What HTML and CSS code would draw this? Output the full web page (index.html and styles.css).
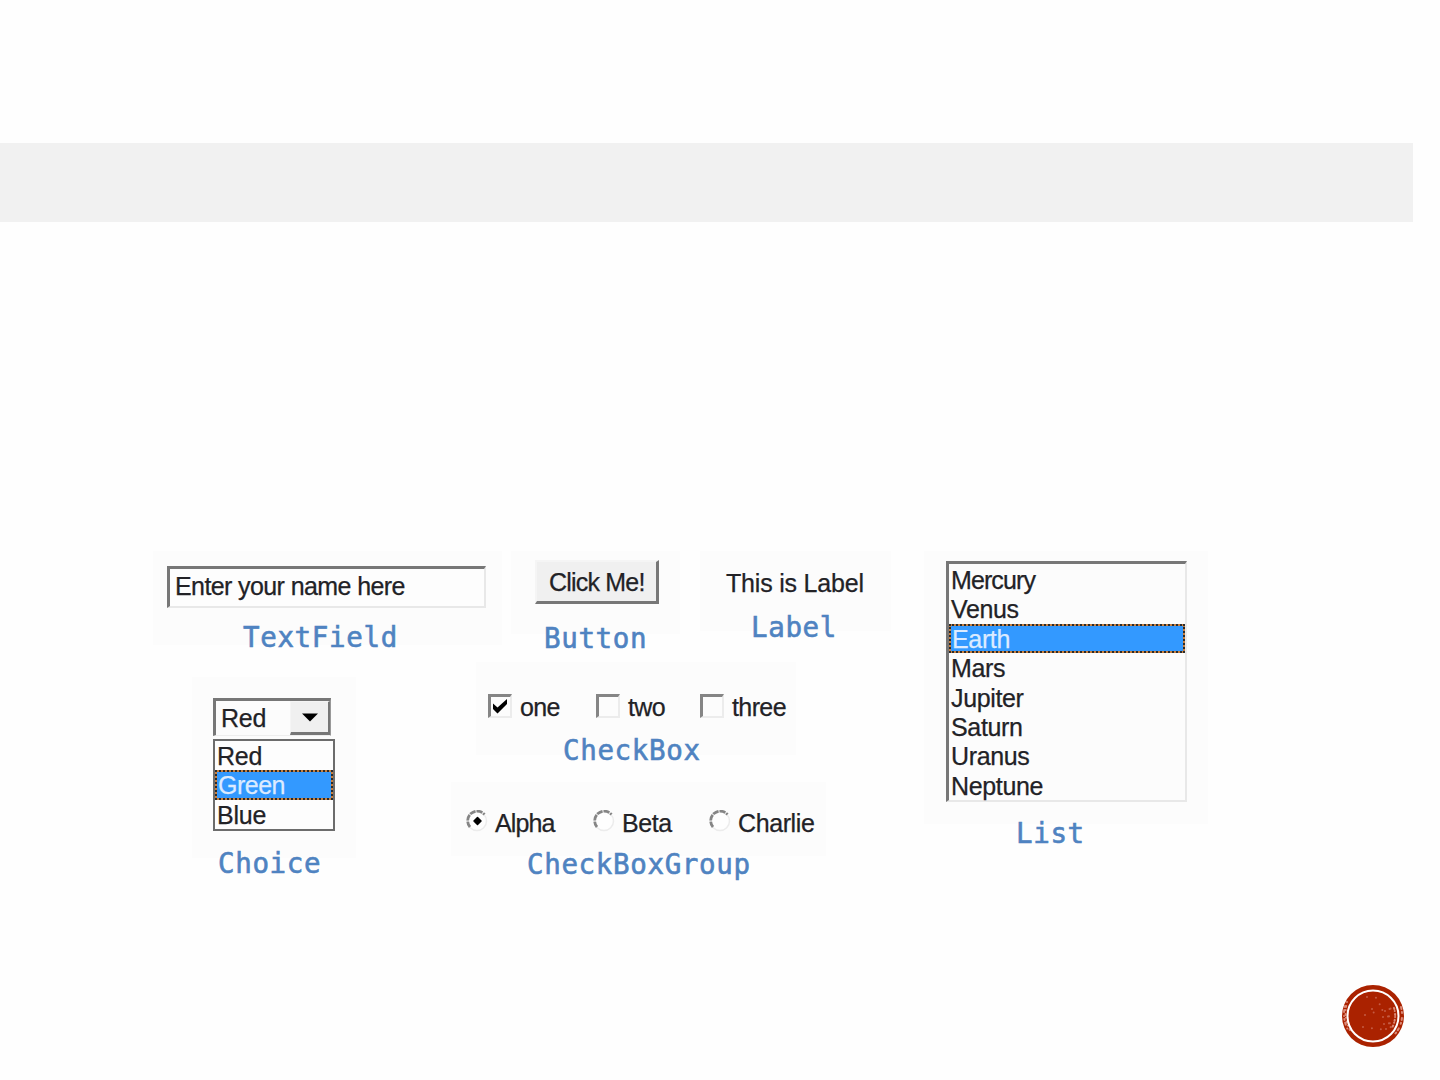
FILE: index.html
```html
<!DOCTYPE html>
<html lang="en">
<head>
<meta charset="utf-8">
<title>AWT components</title>
<link rel="stylesheet" href="styles.css">
</head>
<body>
<main class="slide">
  <header class="band"></header>
  <section class="gallery">
    <div class="left">
      <div class="top-row">
        <figure class="panel p-field">
          <div class="field"><span>Enter your name here</span></div>
          <figcaption>TextField</figcaption>
        </figure>
        <figure class="panel p-button">
          <div class="button"><span>Click Me!</span></div>
          <figcaption>Button</figcaption>
        </figure>
        <figure class="panel p-label">
          <div class="label"><span>This is Label</span></div>
          <figcaption>Label</figcaption>
        </figure>
      </div>
      <div class="bottom-row">
        <figure class="panel p-choice">
          <div class="select"><span>Red</span>
            <div class="arrow"><svg width="16" height="9" viewBox="0 0 16 9"><path d="M0 .5H16L8 8.500Z"/></svg></div>
          </div>
          <div class="options">
            <div class="option">Red</div>
            <div class="option selected">Green</div>
            <div class="option">Blue</div>
          </div>
          <figcaption>Choice</figcaption>
        </figure>
        <div class="stack">
          <figure class="panel p-check">
            <div class="checks">
              <div class="check"><i class="box"><svg width="19" height="19" viewBox="0 0 19 19"><path d="M2 6.500L6.500 10.500L16 2V7L6.500 16.500L2 12Z"/></svg></i><span>one</span></div>
              <div class="check"><i class="box"></i><span>two</span></div>
              <div class="check"><i class="box"></i><span>three</span></div>
            </div>
            <figcaption>CheckBox</figcaption>
          </figure>
          <figure class="panel p-group">
            <div class="radios">
              <div class="radio"><svg width="22" height="22" viewBox="0 0 22 22"><circle class="rim" cx="11" cy="11" r="9.500"/><path class="shade" d="M4 17A9.300 9.300 0 0 1 18.500 4.500"/><path class="dot" d="M11.500 7.500L15 11L11.500 14.500L8 11Z"/></svg><span>Alpha</span></div>
              <div class="radio"><svg width="22" height="22" viewBox="0 0 22 22"><circle class="rim" cx="11" cy="11" r="9.500"/><path class="shade" d="M4 17A9.300 9.300 0 0 1 18.500 4.500"/></svg><span>Beta</span></div>
              <div class="radio"><svg width="22" height="22" viewBox="0 0 22 22"><circle class="rim" cx="11" cy="11" r="9.500"/><path class="shade" d="M4 17A9.300 9.300 0 0 1 18.500 4.500"/></svg><span>Charlie</span></div>
            </div>
            <figcaption>CheckBoxGroup</figcaption>
          </figure>
        </div>
      </div>
    </div>
    <figure class="panel p-list">
      <div class="list">
        <div class="item">Mercury</div>
        <div class="item">Venus</div>
        <div class="item selected">Earth</div>
        <div class="item">Mars</div>
        <div class="item">Jupiter</div>
        <div class="item">Saturn</div>
        <div class="item">Uranus</div>
        <div class="item">Neptune</div>
      </div>
      <figcaption>List</figcaption>
    </figure>
  </section>
  <footer class="footer">
    <svg width="64" height="64" viewBox="0 0 64 64">
      <circle cx="32" cy="32" r="31" fill="#aa2200"/>
      <g fill="none" stroke="#dc8b78" stroke-width="2" stroke-linecap="round">
        <path stroke-dasharray="1 3 2 4 0 3" d="M4 22Q1 34 7 46"/>
        <path stroke-dasharray="0 4 1 3" d="M6 18Q2 33 9 46"/>
        <path stroke-dasharray="2 3 1 5" d="M60 23Q64 39 53 51"/>
        <path stroke-dasharray="1 2 0 3" d="M53 24Q56 34 51 44"/>
      </g>
      <g fill="none" stroke="#c45b43" stroke-width="2" stroke-linecap="round">
        <path stroke-dasharray="0 5 1 6" d="M44 27L51 24M42 33L51 32M43 40L50 39M45 45L50 43"/>
        <path stroke-dasharray="0 9" d="M26 13L39 14M31 25L44 17M24 31L45 25M22 43L45 46"/>
      </g>
      <circle cx="32" cy="32" r="25.500" fill="none" stroke="#fff" stroke-width="2"/>
    </svg>
  </footer>
</main>
</body>
</html>
```
FILE: styles.css
```css
* { box-sizing: border-box; }
body { margin: 0; background: #fefefe; }
figure { margin: 0; }

.slide {
  width: 1440px;
  height: 1080px;
  overflow: hidden;
  display: flex;
  flex-direction: column;
  padding-top: 143px;
  font: 25px/29px "Liberation Sans", Arial, sans-serif;
  letter-spacing: -0.2px;
  color: #222226;
  -webkit-text-stroke: 0.25px currentColor;
  white-space: nowrap;
}
.band { width: 1413px; height: 79px; flex: none; background: #f1f1f1; }

.gallery { display: flex; align-items: flex-start; margin: 329px 0 0 153px; height: 350px; flex: none; }
.left { width: 771px; }
.top-row { display: flex; align-items: flex-start; height: 111px; }
.bottom-row { display: flex; align-items: flex-start; padding-left: 39px; }

.panel { background: #fcfcfc; flex: none; }
figcaption {
  font: 27.5px/30px "DejaVu Sans Mono", monospace;
  letter-spacing: 0.65px;
  color: #4f83c1;
  -webkit-text-stroke: 0.6px currentColor;
}

/* text field */
.p-field { width: 349px; height: 94px; padding: 15px 0 0 14px; }
.field {
  width: 319px; height: 42px;
  padding: 3px 0 0 5px;
  background: #fdfdfd;
  border: solid; border-width: 3px 2px 2px 3px;
  border-color: #777 #e8e8e8 #e8e8e8 #777;
  letter-spacing: -0.6px;
}
.p-field figcaption { margin: 14px 0 0 76px; }

/* button */
.p-button { width: 169px; height: 83px; margin-left: 9px; padding: 9px 0 0 24px; }
.button {
  width: 124px; height: 44px;
  padding: 6px 0 0 12px;
  background: #f0f0f0;
  border: solid; border-width: 2px 3px 3px 2px;
  border-color: #f5f5f5 #777 #777 #f5f5f5;
  letter-spacing: -0.8px;
}
.p-button figcaption { margin: 19px 0 0 9px; }

/* label */
.p-label { width: 191px; height: 80px; margin-left: 20px; padding: 18px 0 0 26px; }
.p-label figcaption { margin: 14px 0 0 25px; }

/* choice */
.p-choice { width: 164px; height: 181px; margin-top: 15px; padding: 21px 0 0 21px; }
.select {
  display: flex; justify-content: space-between;
  width: 118px; height: 38px;
  padding-left: 5px;
  line-height: 35px;
  border: solid; border-width: 3px 1px 1px 3px;
  border-color: #777 #999 #eee #777;
}
.arrow {
  display: flex; align-items: center; justify-content: center;
  width: 40px; height: 34px;
  background: #f0f0f0;
  border: solid; border-width: 1px 2px 3px 1px;
  border-color: #f5f5f5 #777 #777 #f5f5f5;
}
.arrow path { fill: #000; }
.options { width: 122px; height: 92px; margin-top: 3px; border: 2px solid #6c6c6c; background: #fdfdfd; }
.option { height: 29.4px; line-height: 30.4px; padding-left: 2px; }
.selected {
  color: #dcebff;
  border: 2px dotted #2b2b2b;
  background: linear-gradient(#3399ff, #3399ff) padding-box, #c9803f border-box;
}
.option.selected { line-height: 27.4px; padding-left: 1px; letter-spacing: -0.5px; }
.p-choice figcaption { margin: 17px 0 0 5px; }

/* check boxes and radios */
.stack { padding-left: 95px; }
.p-check { width: 320px; height: 93px; margin-left: 25px; padding: 30px 0 0 12px; }
.checks { display: flex; height: 29px; line-height: 30px; }
.check { display: flex; }
.check:nth-child(1) { width: 108px; }
.check:nth-child(2) { width: 104px; }
.check span { margin-left: 8px; letter-spacing: -0.6px; }
.box {
  width: 24px; height: 24px; margin-top: 2px;
  border: solid; border-width: 3px 2px 2px 3px;
  border-color: #858585 #ececec #ececec #858585;
}
.box svg { display: block; }
.p-check figcaption { margin: 14px 0 0 75px; }

.p-group { width: 375px; height: 74px; margin-top: 27px; padding: 26px 0 0 15px; }
.radios { display: flex; height: 29px; line-height: 30px; }
.radio { display: flex; }
.radio:nth-child(1) { width: 127px; }
.radio:nth-child(2) { width: 116px; }
.radio svg { margin-top: 2px; }
.radio span { margin-left: 7px; letter-spacing: -0.4px; }
.radio:nth-child(1) span { letter-spacing: -0.9px; }
.rim { fill: #fefefe; stroke: #ececec; stroke-width: 1.5; }
.shade { fill: none; stroke: #858585; stroke-width: 2.8; stroke-dasharray: 6 1; }
.dot { fill: #000; stroke: #000; stroke-width: 1.5; stroke-linejoin: round; }
.p-group figcaption { margin: 12px 0 0 61px; }

/* list */
.p-list { width: 284px; height: 273px; padding: 10px 0 0 22px; }
.list {
  width: 241px; height: 241px;
  padding-top: 1px;
  border: solid; border-width: 3px 2px 2px 3px;
  border-color: #777 #e8e8e8 #e8e8e8 #777;
}
.item { height: 29.4px; line-height: 31px; padding-left: 2px; letter-spacing: -0.35px; }
.item:first-child { letter-spacing: -0.9px; }
.item.selected { line-height: 27.4px; padding-left: 1px; }
.p-list figcaption { margin: 16px 0 0 70px; }

.footer { display: flex; justify-content: flex-end; margin-top: 83px; padding-right: 35px; }
```
